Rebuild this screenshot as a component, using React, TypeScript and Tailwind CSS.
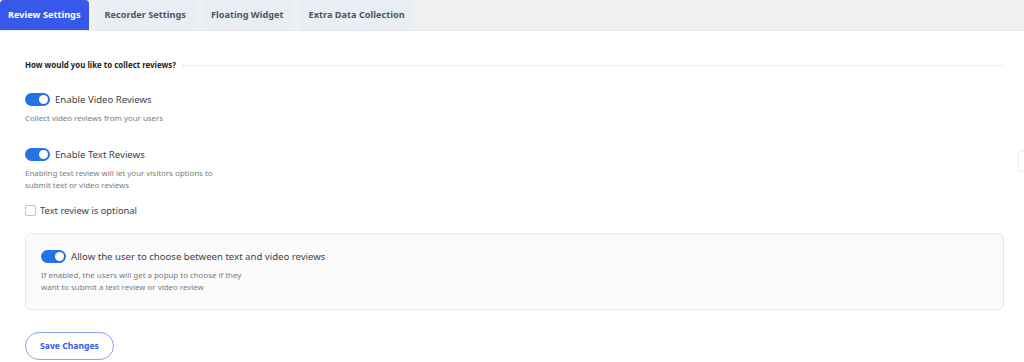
import React from 'react';

const tabs = ['Review Settings', 'Recorder Settings', 'Floating Widget', 'Extra Data Collection'];

function Toggle() {
  return (
    <span className="flex h-[13px] w-[25px] shrink-0 items-center justify-end rounded-full bg-[#2571e6] pr-[2px]">
      <span className="h-[9px] w-[9px] rounded-full bg-white" />
    </span>
  );
}

function Setting({ label, desc }: { label: string; desc: string[] }) {
  return (
    <div>
      <div className="flex h-[14px] items-center gap-[5px]">
        <Toggle />
        <span className="text-[9.6px] text-[#3c434a]">{label}</span>
      </div>
      <div className="mt-[5px] text-[7.9px] leading-[12px] text-[#787c82]">
        {desc.map((d) => (
          <div key={d}>{d}</div>
        ))}
      </div>
    </div>
  );
}

export default function App() {
  return (
    <div className="relative h-[362px] w-[1024px] overflow-hidden bg-white" style={{ fontFamily: '"Noto Sans", "Open Sans", sans-serif' }}>
      <div className="flex h-[31px] items-end gap-[7px] border-b border-dotted border-[#e4e4e4] bg-[#f0f0f1]">
        {tabs.map((t, i) => (
          <div
            key={t}
            className={
              i === 0
                ? 'flex h-[30px] items-center rounded-t-[4px] bg-[#3858e9] px-[8px] text-[9.2px] font-bold text-white'
                : 'flex h-[30px] items-center rounded-t-[4px] bg-[#e9edf4] px-[9px] text-[9.2px] font-bold text-[#50575e]'
            }
          >
            {t}
          </div>
        ))}
      </div>

      <div className="pl-[25px] pr-[20px]">
        <div className="mt-[29px] flex items-center gap-[6px]">
          <span className="text-[7.9px] font-bold text-[#1d2327]">How would you like to collect reviews?</span>
          <span className="h-0 flex-1 border-t border-dotted border-[#dcdcde]" />
        </div>

        <div className="mt-[21px]">
          <Setting label="Enable Video Reviews" desc={['Collect video reviews from your users']} />
        </div>
        <div className="mt-[24px]">
          <Setting
            label="Enable Text Reviews"
            desc={['Enabling text review will let your visitors options to', 'submit text or video reviews']}
          />
        </div>

        <div className="mt-[13px] flex items-center gap-[4px]">
          <span className="h-[11px] w-[11px] rounded-[2px] border border-[#c3c4c7] bg-white" />
          <span className="text-[9.4px] text-[#3c434a]">Text review is optional</span>
        </div>

        <div className="mt-[15px] h-[77px] rounded-[6px] border border-[#e6e7e9] bg-[#fbfbfc] px-[15px] pt-[16px]">
          <Setting
            label="Allow the user to choose between text and video reviews"
            desc={['If enabled, the users will get a popup to choose if they', 'want to submit a text review or video review']}
          />
        </div>

        <button className="mt-[22px] h-[28px] w-[89px] rounded-full border border-[#8ea0f3] text-[8.6px] font-bold text-[#3858e9]">
          Save Changes
        </button>
      </div>

      <div className="absolute right-[-8px] top-[150px] h-[22px] w-[14px] rounded-[3px] border border-[#ececec] bg-white" />
    </div>
  );
}
